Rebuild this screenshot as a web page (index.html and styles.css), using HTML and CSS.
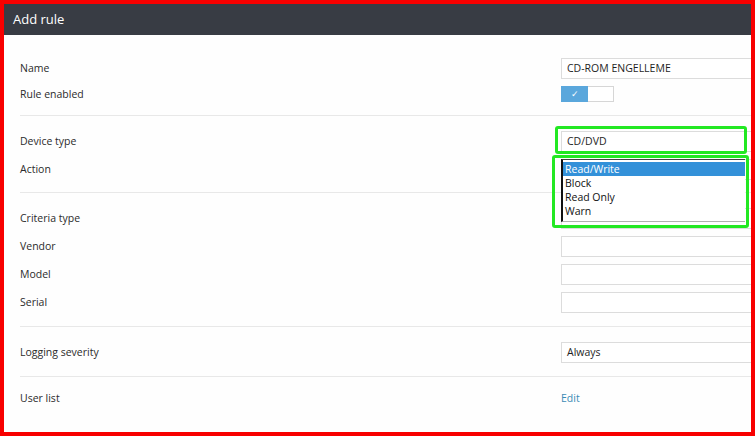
FILE: index.html
```html
<!DOCTYPE html>
<html lang="en">
<head>
  <meta charset="UTF-8">
  <title>Add rule</title>
  <link rel="stylesheet" href="styles.css">
</head>
<body>

  <div class="frame">
    <div class="dialog-header">Add rule</div>

    <div class="rule-form">
      <!-- General -->
      <div class="section section-first">
        <div class="row">
          <span class="label">Name</span>
          <div class="control"><div class="field">CD-ROM ENGELLEME</div></div>
        </div>
        <div class="row">
          <span class="label">Rule enabled</span>
          <div class="control">
            <div class="toggle"><span class="toggle-on">&#10003;</span><span class="toggle-off"></span></div>
          </div>
        </div>
      </div>

      <!-- Device -->
      <div class="section">
        <div class="row">
          <span class="label">Device type</span>
          <div class="control marked"><div class="field">CD/DVD</div></div>
        </div>
        <div class="row">
          <span class="label">Action</span>
          <div class="control">
            <div class="field"></div>
            <!-- open select popup -->
            <div class="dropdown">
              <ul class="dropdown-list">
                <li class="selected">Read/Write</li>
                <li>Block</li>
                <li>Read Only</li>
                <li>Warn</li>
              </ul>
            </div>
          </div>
        </div>
      </div>

      <!-- Criteria -->
      <div class="section section-wide">
        <div class="row">
          <span class="label">Criteria type</span>
          <div class="control"><div class="field"></div></div>
        </div>
        <div class="row">
          <span class="label">Vendor</span>
          <div class="control"><div class="field"></div></div>
        </div>
        <div class="row">
          <span class="label">Model</span>
          <div class="control"><div class="field"></div></div>
        </div>
        <div class="row">
          <span class="label">Serial</span>
          <div class="control"><div class="field"></div></div>
        </div>
      </div>

      <div class="section section-wide">
        <div class="row">
          <span class="label">Logging severity</span>
          <div class="control"><div class="field">Always</div></div>
        </div>
      </div>

      <div class="section section-last">
        <div class="row">
          <span class="label">User list</span>
          <div class="control"><a class="edit-link" href="#">Edit</a></div>
        </div>
      </div>
    </div>
  </div>

</body>
</html>
```

FILE: styles.css
```css
*,
*::before,
*::after {
  box-sizing: border-box;
}

body {
  margin: 0;
  font-family: "Open Sans", "Noto Sans", sans-serif;
  font-size: 10.5px;
  color: #2b2b2b;
  background-color: #ff0000;
}

.frame {
  width: 755px;
  height: 436px;
  border: 4px solid #f80000;
  background-color: #fefefe;
  overflow: hidden;
}

.dialog-header {
  height: 31px;
  padding-left: 9px;
  background-color: #383c44;
  color: #ffffff;
  font-size: 13px;
  line-height: 31px;
}

.rule-form {
  padding-top: 9px;
}

.section {
  margin-left: 16px;
  padding: 11px 0 9px;
  border-bottom: 1px solid #e8e8e8;
}

.section-first {
  padding-bottom: 8px;
}

.section-first .row {
  height: 26px;
}

.section-wide {
  padding-bottom: 10px;
}

.section-last {
  padding-top: 7px;
  border-bottom: none;
}

.row {
  display: grid;
  grid-template-columns: 541px 1fr;
  align-items: center;
  height: 28px;
}

.control {
  position: relative;
  height: 21px;
  display: flex;
  align-items: center;
}

.field {
  width: 210px;
  height: 21px;
  padding-left: 5px;
  border: 1px solid #dcdcdc;
  background-color: #ffffff;
  line-height: 19px;
  color: #1e1e1e;
}

/* switch: blue half with check, white half */
.toggle {
  display: flex;
  width: 53px;
  height: 16px;
  border: 1px solid #d6d6d6;
  background-color: #ffffff;
}

.toggle-on {
  width: 27px;
  margin: -1px 0 -1px -1px;
  background-color: #5aa7dc;
  color: #ffffff;
  font-size: 9px;
  line-height: 16px;
  text-align: center;
}

.toggle-off {
  flex: 1;
}

/* green highlight boxes */
.marked::after {
  content: "";
  position: absolute;
  left: -6px;
  top: -5px;
  width: 192px;
  height: 28px;
  border: 3px solid #22e822;
  border-radius: 3px;
}

.dropdown {
  position: absolute;
  left: -9px;
  top: -4px;
  width: 197px;
  height: 73px;
  padding: 1px 1px 3px 6px;
  border: 3px solid #22e822;
  border-radius: 3px;
  z-index: 2;
}

.dropdown-list {
  list-style: none;
  margin: 0;
  padding: 2px 0 0;
  height: 100%;
  border-left: 2px solid #111111;
  border-top: 1px solid #444444;
  border-bottom: 1px solid #b0b0b0;
  background-color: #ffffff;
}

.dropdown-list li {
  height: 14px;
  padding-left: 2px;
  line-height: 14px;
  color: #111111;
}

.dropdown-list li.selected {
  background-color: #3391d9;
  color: #ffffff;
}

.edit-link {
  color: #3b8bb5;
  text-decoration: none;
}
```
